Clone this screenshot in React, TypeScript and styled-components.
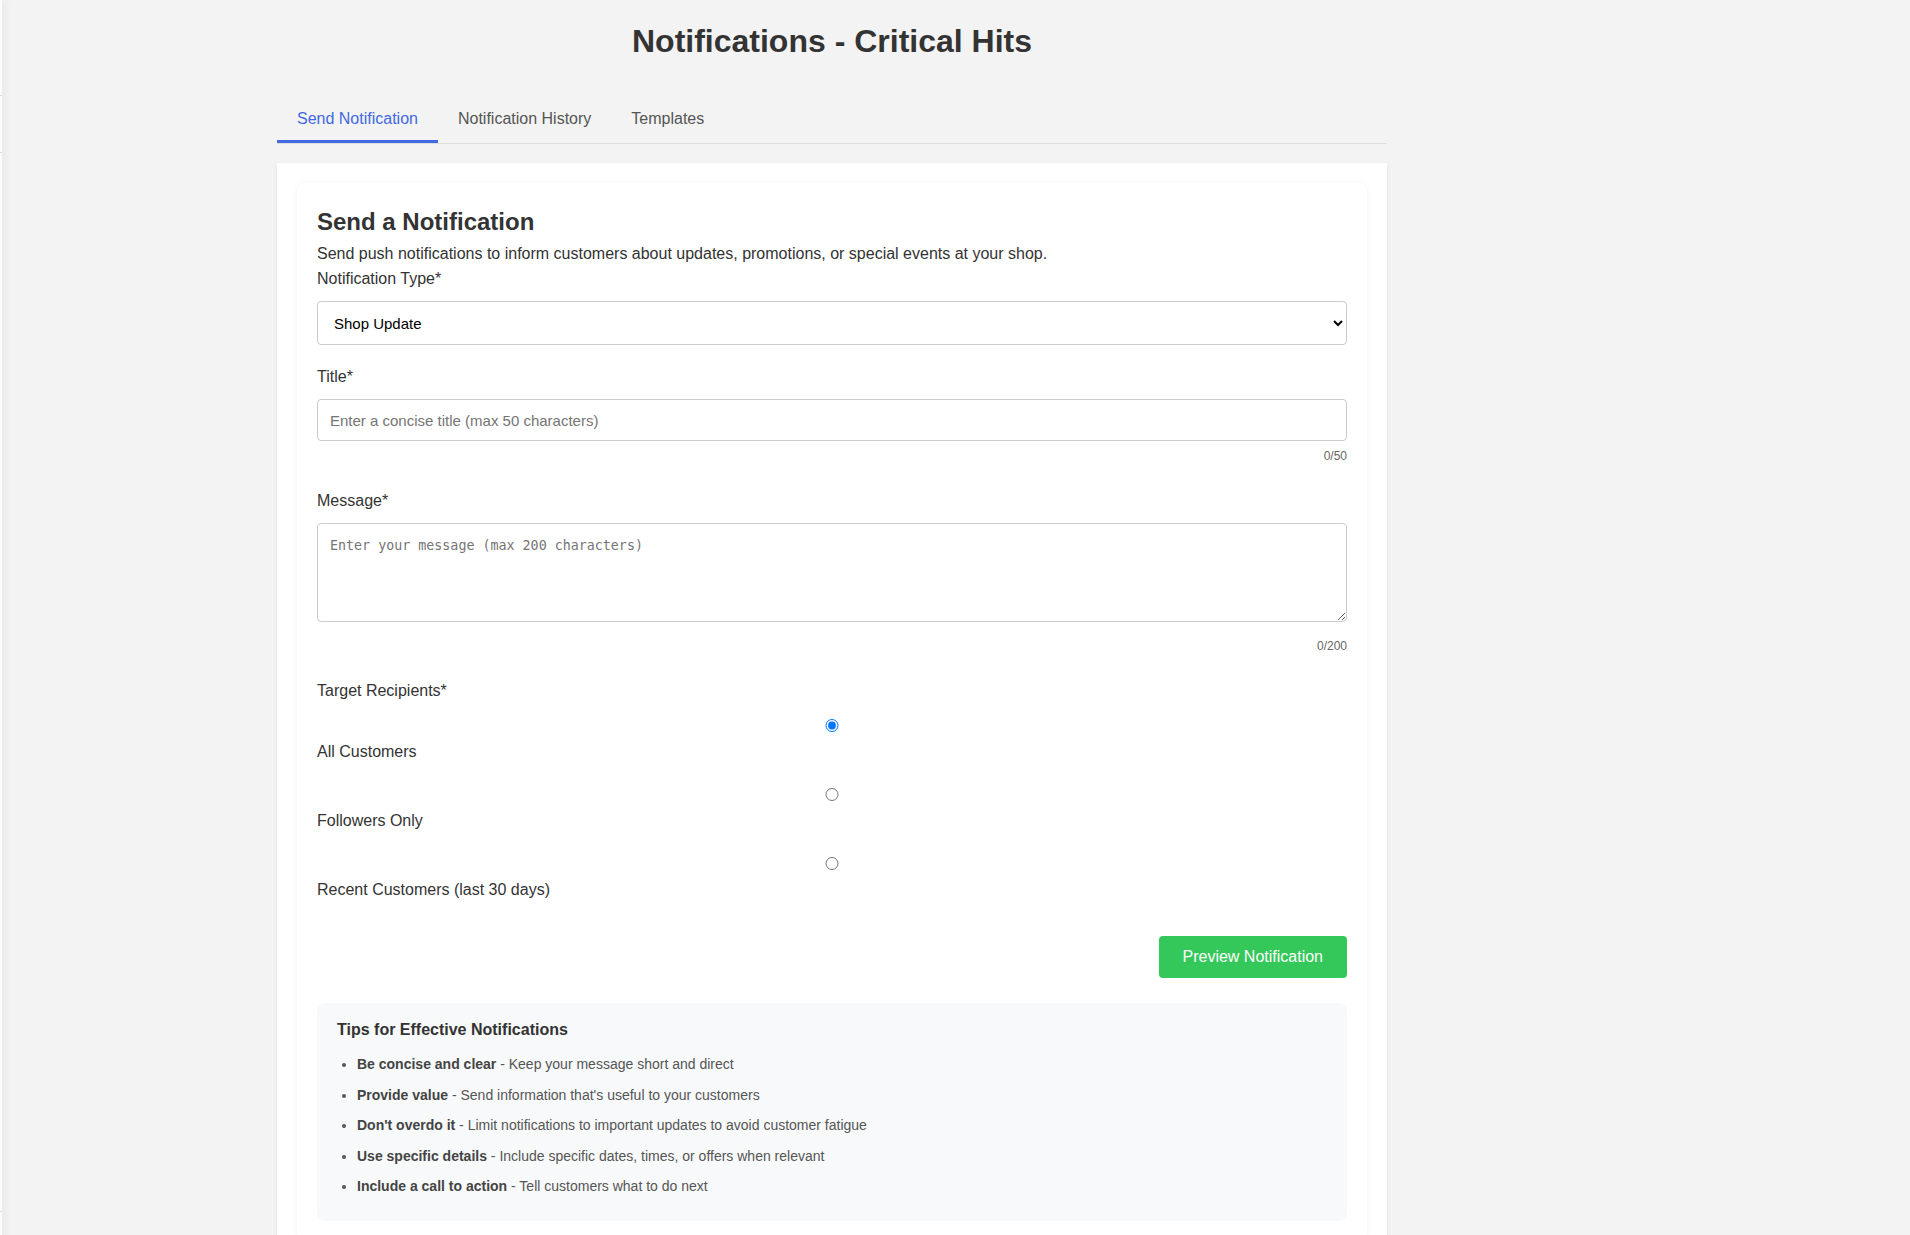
import React, { useState } from 'react';
import styled, { createGlobalStyle } from 'styled-components';

const GlobalStyle = createGlobalStyle`
  body {
    margin: 0;
    background: #f3f3f3;
    font-family: "Liberation Sans", Arial, sans-serif;
    color: #333;
  }
`;

const Page = styled.div`
  display: flex;
  min-height: 100vh;
`;

/* the collapsed sidebar: only its edge is visible */
const SideEdge = styled.aside`
  width: 2px;
  flex-shrink: 0;
  display: flex;
  flex-direction: column;
  background: #fbfbfb;
  box-shadow: 2px 0 6px rgba(0, 0, 0, 0.12);
`;

const SideItem = styled.div<{ $height: number }>`
  height: ${(p) => p.$height}px;
  flex-shrink: 0;
  border-bottom: 1px solid #d9d9d9;
`;

const Main = styled.main`
  flex: 1;
  padding: 23px 0 40px 275px;
`;

const Container = styled.div`
  width: 1110px;
`;

const PageTitle = styled.h1`
  margin: 0 0 38px;
  text-align: center;
  font-size: 32px;
  font-weight: 700;
  color: #333;
`;

const TabBar = styled.nav`
  display: flex;
  border-bottom: 1px solid #ddd;
  margin-bottom: 19px;
`;

const Tab = styled.button<{ $active?: boolean }>`
  padding: 12px 20px;
  border: none;
  border-bottom: 3px solid ${(p) => (p.$active ? '#4169e1' : 'transparent')};
  background: none;
  font-family: inherit;
  font-size: 16px;
  line-height: normal;
  color: ${(p) => (p.$active ? '#4169e1' : '#555')};
  cursor: pointer;
`;

const Panel = styled.section`
  background: #fff;
  padding: 20px;
  box-shadow: 0 2px 4px rgba(0, 0, 0, 0.08);
`;

const FormCard = styled.div`
  display: flex;
  flex-direction: column;
  padding: 20px;
  border-radius: 8px;
  background: #fff;
  box-shadow: 0 1px 6px rgba(0, 0, 0, 0.06);
`;

const Heading = styled.h2`
  margin: 5px 0 9px;
  font-size: 24px;
  font-weight: 700;
  color: #333;
`;

const Intro = styled.p`
  margin: 0 0 7px;
  font-size: 16px;
`;

const FieldGroup = styled.div<{ $gap?: number }>`
  display: flex;
  flex-direction: column;
  margin-bottom: ${(p) => (p.$gap ?? 23)}px;
`;

const Label = styled.label`
  display: block;
  margin-bottom: 13px;
  font-size: 16px;
`;

const Select = styled.select`
  width: 100%;
  height: 44px;
  padding: 0 12px;
  border: 1px solid #ccc;
  border-radius: 4px;
  background: #fff;
  font-family: "Liberation Sans", Arial, sans-serif;
  font-size: 15px;
  color: #000;
`;

const TextInput = styled.input`
  box-sizing: border-box;
  width: 100%;
  height: 42px;
  padding: 0 12px;
  border: 1px solid #ccc;
  border-radius: 4px;
  font-family: "Liberation Sans", Arial, sans-serif;
  font-size: 15px;
`;

const TextArea = styled.textarea`
  display: block;
  box-sizing: border-box;
  width: 100%;
  height: 99px;
  margin: 0 0 9px;
  padding: 14px 12px 12px;
  border: 1px solid #ccc;
  border-radius: 4px;
  font-family: "DejaVu Sans Mono", monospace;
  font-size: 13.333px;
`;

const Counter = styled.div`
  margin: 8px 0 6px;
  text-align: right;
  font-size: 12px;
  color: #666;
`;

const Option = styled.div`
  margin-bottom: 21px;
`;

const Radio = styled.input`
  display: block;
  width: 100%;
  height: 13px;
  margin: 6px 0 11px;
`;

const OptionText = styled.label`
  display: block;
  font-size: 16px;
`;

const Actions = styled.div`
  display: flex;
  justify-content: flex-end;
  margin: 16px 0 25px;
`;

const PrimaryButton = styled.button`
  padding: 12px 24px;
  border: none;
  border-radius: 4px;
  background: #34c759;
  color: #fff;
  font-family: inherit;
  font-size: 16px;
  line-height: normal;
  cursor: pointer;
`;

const Tips = styled.div`
  padding: 18px 20px 15px;
  border-radius: 8px;
  background: #f8f9fa;
`;

const TipsTitle = styled.h3`
  margin: 0 0 14px;
  font-size: 16px;
  font-weight: 700;
  color: #333;
`;

const TipList = styled.ul`
  margin: 0;
  padding-left: 20px;
`;

const Tip = styled.li`
  margin-bottom: 8px;
  font-size: 14px;
  line-height: 22.5px;
  color: #555;

  strong {
    color: #444;
  }
`;

const tabs = ['Send Notification', 'Notification History', 'Templates'];

const recipients = [
  { value: 'all', label: 'All Customers' },
  { value: 'followers', label: 'Followers Only' },
  { value: 'recent', label: 'Recent Customers (last 30 days)' },
];

const tips = [
  ['Be concise and clear', 'Keep your message short and direct'],
  ['Provide value', "Send information that's useful to your customers"],
  ["Don't overdo it", 'Limit notifications to important updates to avoid customer fatigue'],
  ['Use specific details', 'Include specific dates, times, or offers when relevant'],
  ['Include a call to action', 'Tell customers what to do next'],
];

const App: React.FC = () => {
  const [activeTab, setActiveTab] = useState(0);
  const [title, setTitle] = useState('');
  const [message, setMessage] = useState('');
  const [target, setTarget] = useState('all');

  return (
    <Page>
      <GlobalStyle />
      <SideEdge>
        <SideItem $height={95} />
        <SideItem $height={56} />
        <SideItem $height={1058} />
      </SideEdge>
      <Main>
        <Container>
          <PageTitle>Notifications - Critical Hits</PageTitle>
          <TabBar>
            {tabs.map((t, i) => (
              <Tab key={t} $active={i === activeTab} onClick={() => setActiveTab(i)}>
                {t}
              </Tab>
            ))}
          </TabBar>
          <Panel>
            <FormCard>
              <Heading>Send a Notification</Heading>
              <Intro>
                Send push notifications to inform customers about updates, promotions, or special
                events at your shop.
              </Intro>

              <FieldGroup>
                <Label htmlFor="type">Notification Type*</Label>
                <Select id="type" defaultValue="update">
                  <option value="update">Shop Update</option>
                  <option value="promo">Promotion</option>
                  <option value="event">Special Event</option>
                </Select>
              </FieldGroup>

              <FieldGroup>
                <Label htmlFor="title">Title*</Label>
                <TextInput
                  id="title"
                  maxLength={50}
                  placeholder="Enter a concise title (max 50 characters)"
                  value={title}
                  onChange={(e) => setTitle(e.target.value)}
                />
                <Counter>{title.length}/50</Counter>
              </FieldGroup>

              <FieldGroup>
                <Label htmlFor="message">Message*</Label>
                <TextArea
                  id="message"
                  maxLength={200}
                  placeholder="Enter your message (max 200 characters)"
                  value={message}
                  onChange={(e) => setMessage(e.target.value)}
                />
                <Counter>{message.length}/200</Counter>
              </FieldGroup>

              <FieldGroup $gap={0}>
                <Label>Target Recipients*</Label>
                {recipients.map((r) => (
                  <Option key={r.value}>
                    <Radio
                      type="radio"
                      id={`target-${r.value}`}
                      name="target"
                      checked={target === r.value}
                      onChange={() => setTarget(r.value)}
                    />
                    <OptionText htmlFor={`target-${r.value}`}>{r.label}</OptionText>
                  </Option>
                ))}
              </FieldGroup>

              <Actions>
                <PrimaryButton>Preview Notification</PrimaryButton>
              </Actions>

              <Tips>
                <TipsTitle>Tips for Effective Notifications</TipsTitle>
                <TipList>
                  {tips.map(([head, text]) => (
                    <Tip key={head}>
                      <strong>{head}</strong> - {text}
                    </Tip>
                  ))}
                </TipList>
              </Tips>
            </FormCard>
          </Panel>
        </Container>
      </Main>
    </Page>
  );
};

export default App;
